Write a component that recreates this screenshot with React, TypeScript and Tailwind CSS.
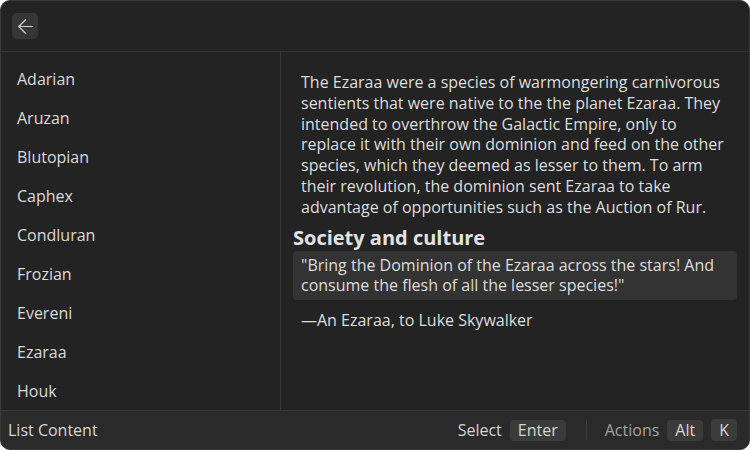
import { ArrowLeft } from "lucide-react";

const species = [
  "Adarian",
  "Aruzan",
  "Blutopian",
  "Caphex",
  "Condluran",
  "Frozian",
  "Evereni",
  "Ezaraa",
  "Houk",
];

const Kbd = ({ children }: { children: React.ReactNode }) => (
  <span className="rounded-[4px] bg-[#3b3b3b] px-2 text-[16px] leading-[21px] text-[#d6d6d6]">
    {children}
  </span>
);

export default function App() {
  return (
    <div className="h-[450px] w-[750px] bg-white font-['Open_Sans',sans-serif]">
      <div className="flex h-full flex-col overflow-hidden rounded-[10px] border border-[#3a3a3a] bg-[#232323] text-[#dcdcdc]">
        {/* Header */}
        <div className="flex h-[51px] shrink-0 items-center border-b border-[#383838] px-[11px]">
          <button className="flex h-[26px] w-[26px] items-center justify-center rounded-[5px] bg-[#363636] text-[#cfcfcf]">
            <ArrowLeft size={23} strokeWidth={1.3} />
          </button>
        </div>

        <div className="flex min-h-0 flex-1">
          {/* Sidebar */}
          <ul className="w-[280px] shrink-0 border-r border-[#383838] pt-[7px]">
            {species.map((s) => (
              <li key={s} className="flex h-[39px] items-center px-4 text-[16px] text-[#dadada]">
                {s}
              </li>
            ))}
          </ul>

          {/* Detail */}
          <div className="flex-1 px-3 pt-5 text-[16px] leading-[20.8px] text-[#dedede]">
            <p className="px-2">
              The Ezaraa were a species of warmongering carnivorous sentients that were native
              to the the planet Ezaraa. They intended to overthrow the Galactic Empire, only to
              replace it with their own dominion and feed on the other species, which they
              deemed as lesser to them. To arm their revolution, the dominion sent Ezaraa to
              take advantage of opportunities such as the Auction of Rur.
            </p>
            <h2 className="mt-[9px] text-[20px] font-bold leading-[22px] text-[#e2e2e2]">
              Society and culture
            </h2>
            <blockquote className="mt-[2px] rounded-[4px] bg-[#333333] px-2 py-[4px]">
              "Bring the Dominion of the Ezaraa across the stars! And consume the flesh of all
              the lesser species!"
            </blockquote>
            <p className="mt-[10px] px-2">—An Ezaraa, to Luke Skywalker</p>
          </div>
        </div>

        {/* Footer */}
        <div className="flex h-[39px] shrink-0 items-center border-t border-[#383838] bg-[#2a2a2a] pl-[7px] pr-3 text-[16px]">
          <span className="text-[#d6d6d6]">List Content</span>
          <div className="ml-auto flex items-center">
            <span className="mr-2 text-[#d4d4d4]">Select</span>
            <Kbd>Enter</Kbd>
            <span className="ml-[20px] mr-[18px] h-[20px] w-px bg-[#3c3c3c]" />
            <span className="mr-2 text-[#a3a3a3]">Actions</span>
            <Kbd>Alt</Kbd>
            <span className="ml-2">
              <Kbd>K</Kbd>
            </span>
          </div>
        </div>
      </div>
    </div>
  );
}
